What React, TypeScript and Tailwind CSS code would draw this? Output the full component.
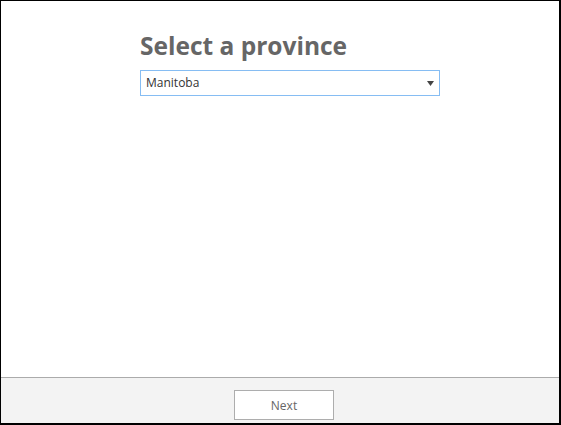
export default function App() {
  return (
    <div className="w-[561px] h-[425px] flex flex-col bg-white border-l border-t border-r-2 border-b-2 border-black" style={{ fontFamily: '"Open Sans", "Noto Sans", sans-serif' }}>
      <div className="flex-1 pl-[139px] pt-[30px]">
        <h1 className="text-[24.5px] leading-[30px] font-bold text-[#666666]">Select a province</h1>
        <div className="mt-[9px] w-[300px] h-[26px] border border-[#86bdf3] flex items-center justify-between pl-[5px] pr-[5px]">
          <span className="text-[12px] text-[#333333]">Manitoba</span>
          <svg width="7" height="5" viewBox="0 0 7 5">
            <path d="M0 0 H7 L3.5 5 Z" fill="#444444" />
          </svg>
        </div>
      </div>
      <div className="h-[46px] bg-[#f3f3f3] border-t border-[#ababab] flex justify-center pt-[12px] pl-[8px]">
        <button className="w-[100px] h-[30px] pt-[1px] bg-white border border-[#adadad] text-[12px] text-[#666666]">Next</button>
      </div>
    </div>
  );
}
